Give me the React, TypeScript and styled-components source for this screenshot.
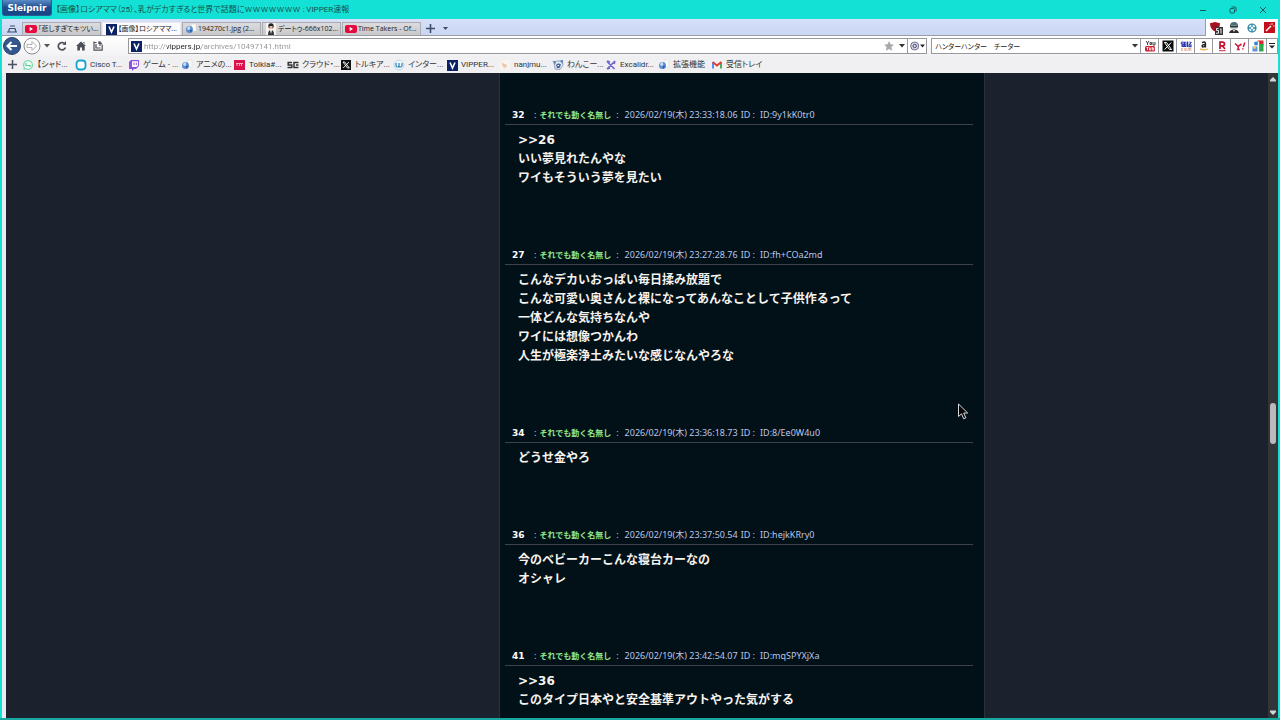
import React from "react";
import styled, { createGlobalStyle } from "styled-components";

const UI_FONT = 'Roboto, "Noto Sans CJK JP", sans-serif';
const TAB_FONT = '"Open Sans", "Noto Sans CJK JP", sans-serif';
const BODY_FONT = '"DejaVu Sans", "Noto Sans CJK JP", sans-serif';
const META_FONT = '"Noto Sans", "Noto Sans CJK JP", sans-serif';

const GlobalStyle = createGlobalStyle`
  *, *::before, *::after { box-sizing: border-box; }
  body { margin: 0; background: #14e1d5; overflow: hidden; }
  button, input { font: inherit; color: inherit; margin: 0; padding: 0; border: 0; background: none; }
  a { color: inherit; text-decoration: none; }
  svg { display: block; flex: none; }
`;

const Window = styled.div`
  display: flex;
  flex-direction: column;
  height: 100vh;
  padding: 0 2px;
  background: #14e1d5;
  border-bottom: 2px solid #17a8a1;
  color: #333;
  font-family: ${UI_FONT};
  font-size: 8px;
  line-height: 12px;
  font-feature-settings: "palt";
`;

const TitleBar = styled.header`
  display: flex;
  align-items: center;
  height: 19px;
  flex: none;
`;

const AppButton = styled.button`
  align-self: flex-start;
  width: 50px;
  height: 16px;
  border: 1px solid #2b5b96;
  border-top: 0;
  border-radius: 0 0 3px 3px;
  background: linear-gradient(#5c8cc6, #1c4c90 50%, #174585);
  color: #fff;
  font-family: "DejaVu Sans", sans-serif;
  font-weight: 700;
  font-size: 9px;
  line-height: 14px;
`;

const PageTitle = styled.h1`
  flex: 1;
  margin: 0;
  padding-left: 4px;
  font-size: 8px;
  font-weight: 400;
  line-height: 18px;
  color: #17514f;
  white-space: nowrap;
`;

const WindowButtons = styled.div`
  display: flex;
`;

const WindowButton = styled.button`
  display: grid;
  place-items: center;
  width: 30px;
  height: 18px;
  color: #155a58;
`;

const TabRow = styled.div`
  display: flex;
  height: 17px;
  flex: none;
  background: #fff;
`;

const TabStrip = styled.div`
  display: flex;
  align-items: flex-end;
  flex: 1;
  gap: 1px;
  background: linear-gradient(#d5e0f8, #cad7f3);
  border-bottom: 1px solid #9a9da6;
  border-right: 1px solid #9a9da6;
`;

const StripButton = styled.button<{ $width: number }>`
  display: grid;
  place-items: center;
  width: ${(p) => p.$width}px;
  height: 13px;
  color: #3f4c68;
`;

const Tab = styled.button<{ $active?: boolean }>`
  display: flex;
  align-items: center;
  gap: 1px;
  width: 79px;
  height: 13px;
  padding-left: 2px;
  border: 1px solid ${(p) => (p.$active ? "#e9e9ee" : "#a9abb2")};
  border-bottom: 0;
  background: ${(p) => (p.$active ? "#fbfbfd" : "linear-gradient(#dcdcde, #c8c8cb)")};
  color: #222;
  font-family: ${TAB_FONT};
  font-size: 7px;
  line-height: 12px;
  white-space: nowrap;
`;

const Extensions = styled.div`
  display: flex;
  width: 72px;
  padding-left: 1px;
`;

const IconButton = styled.button<{ $width: number }>`
  display: grid;
  place-items: center;
  width: ${(p) => p.$width}px;
  height: 100%;
  flex: none;
  color: #4c5058;
`;

const NavRow = styled.div`
  display: flex;
  align-items: center;
  height: 20px;
  flex: none;
  background: linear-gradient(#fff, #f2f2f5);
`;

const NavButtons = styled.div`
  display: flex;
  align-items: center;
  width: 126px;
  height: 20px;
`;

const Field = styled.div<{ $grow: number }>`
  display: flex;
  align-items: center;
  flex: ${(p) => p.$grow} 1 0;
  min-width: 0;
  height: 16px;
  border: 1px solid #98989c;
  background: #fff;
`;

const AddressInput = styled.input`
  flex: 1;
  min-width: 0;
  height: 14px;
  padding-left: 2px;
  outline: 0;
  font-size: 8px;
  color: #999;
  background: linear-gradient(90deg, #949494 25px, #222 25px 59px, #949494 59px);
  background-clip: text;
  -webkit-text-fill-color: transparent;
`;

const SearchInput = styled.input`
  flex: 1;
  min-width: 0;
  height: 14px;
  padding-left: 3px;
  outline: 0;
  font-size: 7px;
  color: #222;
`;

const FieldGap = styled.span`
  width: 4px;
  flex: none;
`;

const EngineButton = styled(IconButton)`
  border-left: 1px solid #98989c;
`;

const Bookmarks = styled.nav`
  display: flex;
  align-items: center;
  height: 17px;
  flex: none;
  padding-left: 1px;
  background: #f0eff2;
`;

const Bookmark = styled.a`
  display: flex;
  align-items: center;
  gap: 3px;
  width: 53px;
  height: 16px;
  flex: none;
  font-size: 8px;
  white-space: nowrap;
`;

const Viewport = styled.div`
  display: flex;
  flex: 1;
  min-height: 0;
  border-left: 4px solid #e6ecf2;
  background: #1b222d;
`;

const Document = styled.div`
  flex: 1;
  min-width: 0;
  overflow: hidden;
`;

const Site = styled.div`
  display: grid;
  grid-template-columns: 210px 1fr;
  max-width: 696px;
  margin: 0 auto;
`;

const Thread = styled.main`
  grid-column: 2;
  min-height: 100vh;
  padding: 35px 11px 0 5px;
  border: 1px solid #2b313c;
  border-width: 0 1px;
  background: #021018;
  font-feature-settings: normal;
`;

const Post = styled.article`
  margin-bottom: 60px;
`;

const PostHeader = styled.header`
  display: flex;
  align-items: center;
  padding: 0 0 2px 7px;
  border-bottom: 1px solid #3c4247;
  font-family: ${META_FONT};
  font-size: 9px;
  line-height: 14px;
  color: #bcc6e8;
  white-space: pre;
`;

const PostNumber = styled.span`
  width: 22px;
  color: #fff;
  font-family: ${BODY_FONT};
  font-weight: 700;
`;

const PostName = styled.b`
  color: #8fe58a;
  font-size: 8px;
  padding: 0 5px 0 3px;
`;

const PostDate = styled.time`
  padding: 0 3px 0 6px;
`;

const PostId = styled.span`
  padding-left: 5px;
`;

const PostBody = styled.p`
  margin: 0;
  padding: 6px 0 0 13px;
  font-family: ${BODY_FONT};
  font-size: 12px;
  font-weight: 700;
  line-height: 19px;
  color: #f6f3ee;
  white-space: pre-line;
`;

const ScrollBar = styled.div`
  display: flex;
  flex-direction: column;
  align-items: center;
  justify-content: space-between;
  width: 10px;
  padding: 4px 0 3px;
  background: #333638;
`;

const ScrollTrack = styled.div`
  display: grid;
  grid-template-rows: 322fr 41px 266fr;
  width: 6px;
  flex: 1;
`;

const ScrollThumb = styled.div`
  grid-row: 2;
  border-radius: 3px;
  background: #bcb9bd;
`;

const Pointer = styled.svg`
  position: absolute;
  left: 957px;
  top: 403px;
`;

const Caret = ({ color = "#333" }: { color?: string }) => (
  <svg width="6" height="4" viewBox="0 0 6 4"><path d="M0 0h6L3 3.5z" fill={color} /></svg>
);

type IconName =
  | "youtube" | "vip" | "globe" | "person" | "whatsapp" | "cisco" | "twitch" | "tolkia"
  | "sc" | "x" | "w" | "cat" | "dog" | "excalidraw" | "gmail";

const glyphs: Record<IconName, React.ReactNode> = {
  youtube: <><rect y="2" width="12" height="8" rx="2" fill="#e5093f" /><path d="M4.7 4v4L8 6z" fill="#fff" /></>,
  vip: <><rect x="1" y="1" width="11" height="11" fill="#0b2265" /><path d="M4 3.5 6.500 9 9 3.5" fill="none" stroke="#fff" strokeWidth="1.6" /></>,
  globe: <><path d="M6 1h5v7H7z" fill="#fafafa" stroke="#d9d4d4" strokeWidth=".5" /><circle cx="4.5" cy="6.5" r="3.5" fill="#5b8ed0" /><path d="M2 5q2-3 3-1t-1 3q-2 0-2-2" fill="#c8e0f7" /><path d="M5 7q2-1 2 1L5 10" fill="#2c5ea6" /></>,
  person: <><rect x="1" width="10" height="12" fill="#f6f3f1" /><circle cx="6" cy="3" r="2.7" fill="#222" /><path d="M4.5 3h3v3h-3z" fill="#e8b9a0" /><path d="M3 12q0-5 3-5t3 5z" fill="#333" /><path d="M5 7h2l-1 4z" fill="#fff" /></>,
  whatsapp: <><circle cx="6" cy="6" r="4.4" fill="#f4fffa" stroke="#7edbb0" strokeWidth="1.4" /><path d="m1.2 11 1-3 2 2z" fill="#7edbb0" /><path d="M4 4v2.5h4V8" fill="none" stroke="#56c994" strokeWidth="1.2" /></>,
  cisco: <rect x="1.5" y="1.5" width="9" height="9" rx="3.2" fill="#fff" stroke="#17a3d2" strokeWidth="1.8" />,
  twitch: <><path d="m1 3 2-2h8v6L8 10H6l-2 2v-2H1z" fill="#8d4fe0" /><path d="M4 2.2h6v4.3L8.5 8H4z" fill="#fff" /><path d="M6 3.5V6M8.3 3.5V6" stroke="#8d4fe0" /></>,
  tolkia: <><rect x="0" y="1" width="11" height="10" fill="#d9124e" /><path d="M2 4.5h7M3 4v3M5.5 5v2M7.5 5v2" stroke="#ffb7c8" strokeWidth=".9" /></>,
  sc: <path d="M5 3.5H1.2V6H4.8V8.5H.5M11.5 3.5H7V8.5h4.5M9 6h2.5" fill="none" stroke="#333" strokeWidth="1.5" />,
  x: <><rect x="1" y="1" width="10" height="10" fill="#111" /><path d="M3 3h1.8l4.5 6H7.5zM9 3 3.2 9" fill="none" stroke="#fff" strokeWidth=".9" /></>,
  w: <><circle cx="6" cy="6" r="4.8" fill="#f6fbff" stroke="#b4d5e7" /><path d="M3 4v2.5Q3 8 4.5 8T6 6.5V4v2.5Q6 8 7.5 8T9 6.5V4" fill="none" stroke="#2a83b7" strokeWidth="1.2" /></>,
  cat: <><rect x="1" y="1" width="10" height="10" fill="#f8f3ee" /><path d="m3 3 2 2h2l1 3-3 1-2-3z" fill="#ecc9ad" /></>,
  dog: <><path d="M2 2.500 10.500 1.500 11 6 8 10.500 3 10z" fill="#dfeaf7" stroke="#8296b8" strokeWidth=".8" /><path d="m.5 2 3.500.5-1 3.500zM8 2l3-1-.5 4z" fill="#5f80b5" /><path d="M4 6q2-2.500 5-.5L7.500 9 5 9.300z" fill="#4a6591" /><path d="M5.500 6.500h1.500" stroke="#fff" strokeWidth="1.1" /></>,
  excalidraw: <path d="M2 2.5 9.5 10M10 2 2 10M2 2l3 1M10 2 9 5M2 10l3-1" fill="none" stroke="#7168c9" strokeWidth="1.7" />,
  gmail: <><path d="M2 9.5V3.5" stroke="#4285f4" strokeWidth="1.8" /><path d="M10 9.5V3.5" stroke="#34a853" strokeWidth="1.8" /><path d="m1.6 3 4.4 3.6L10.4 3" fill="none" stroke="#e43c30" strokeWidth="1.9" /></>,
};

const Icon = ({ name }: { name: IconName }) => (
  <svg width="12" height="12" viewBox="0 0 12 12" aria-hidden="true">{glyphs[name]}</svg>
);

const tabs: { icon: IconName; label: string; active?: boolean }[] = [
  { icon: "youtube", label: "「悲しすぎてキツい..." },
  { icon: "vip", label: "【画像】ロシアママ...", active: true },
  { icon: "globe", label: "194270c1.jpg (2..." },
  { icon: "person", label: "デートゥ-666x102..." },
  { icon: "youtube", label: "Time Takers - Of..." },
];

const bookmarks: { icon: IconName; label: string }[] = [
  { icon: "whatsapp", label: "【シャド..." },
  { icon: "cisco", label: "Cisco T..." },
  { icon: "twitch", label: "ゲーム - ..." },
  { icon: "globe", label: "アニメの..." },
  { icon: "tolkia", label: "Tolkia#..." },
  { icon: "sc", label: "クラウド・..." },
  { icon: "x", label: "トルキア..." },
  { icon: "w", label: "インター..." },
  { icon: "vip", label: "VIPPER..." },
  { icon: "cat", label: "nanjmu..." },
  { icon: "dog", label: "わんこー..." },
  { icon: "excalidraw", label: "Excalidr..." },
  { icon: "globe", label: "拡張機能" },
  { icon: "gmail", label: "受信トレイ" },
];

const engines: { label: string; art: React.ReactNode }[] = [
  { label: "YouTube", art: <><path d="M2 1l1.5 2L5 1M3.5 3v2M6 2.5h1.5v2H6zM9 2v3h2V2" fill="none" stroke="#444" /><rect x="1" y="6" width="10" height="5.5" rx="1.5" fill="#cf2036" /><path d="M2.5 7.5h2M3.5 7.5V10M5.5 7.5V10h1.3V7.5M8.3 7v3h1.4V8H8.3" fill="none" stroke="#fff" strokeWidth=".8" /></> },
  { label: "X", art: <><rect x=".5" y=".5" width="11" height="11" fill="#0c0c0c" /><path d="M2.5 2.5h2l5 7h-2zM9.2 2.5 2.7 9.5" fill="none" stroke="#fff" /></> },
  { label: "価格.com", art: <><path d="M2 2v5M.8 3.5 2.5 1.5M3 2.2h3.2M3.2 4h2.7v2.5H3.2zM4.5 2v4M7.5 1.5V7M6.6 3h2M9.5 2 11 2.5 9 5M9 5h2v1.7H9z" fill="none" stroke="#2a37ad" strokeWidth="1.1" /><path d="M3 8.5H1.5v2H3M4.7 8.5h1.5v2H4.7zM8 11V8.5h3V11M9.5 8.5V11" fill="none" stroke="#e3a083" strokeWidth=".8" /></> },
  { label: "Amazon", art: <><path d="M4 2.7Q7.4.9 7.4 3.5v4M7.3 4.5Q4 4.4 4.2 6.2T7.3 6" fill="none" stroke="#222" strokeWidth="1.5" /><path d="M2 8.8q4 2.4 8-.1" fill="none" stroke="#f2a73b" strokeWidth="1.2" /></> },
  { label: "楽天", art: <><path d="M4 9V2.2h2.5q2 0 2 1.8T6.5 5.8H4M6.3 5.8 9 9" fill="none" stroke="#c4102e" strokeWidth="1.7" /><path d="M3 10.7h6.5" stroke="#c4102e" strokeWidth=".9" /></> },
  { label: "Yahoo!", art: <><path d="m1 3.5 3.2 3L7.5 4M4.2 6.2v3.2M2.8 9.5h3" fill="none" stroke="#d11b45" strokeWidth="1.6" /><path d="M10.8 2.5 9.3 7M8.8 8.2v1.2" stroke="#d11b45" strokeWidth="1.5" /></> },
  { label: "Google", art: <><rect x="5.500" y=".5" width="6" height="5" fill="#d62b2b" /><rect x="7" y="4" width="4.500" height="7.500" fill="#2ba84a" /><rect x=".5" y="6.500" width="5" height="5" fill="#5d93dd" /><circle cx="4" cy="3.500" r="2" fill="#3d83d8" /><path d="M6.500 1.500v8" stroke="#fff" strokeWidth="1.300" /><circle cx="2.500" cy="7.500" r="1.400" fill="#f1d35a" /></> },
];

const posts = [
  { no: 32, time: "2026/02/19(木) 23:33:18.06", id: "9y1kK0tr0", body: ">>26\nいい夢見れたんやな\nワイもそういう夢を見たい" },
  { no: 27, time: "2026/02/19(木) 23:27:28.76", id: "fh+COa2md", body: "こんなデカいおっぱい毎日揉み放題で\nこんな可愛い奥さんと裸になってあんなことして子供作るって\n一体どんな気持ちなんや\nワイには想像つかんわ\n人生が極楽浄土みたいな感じなんやろな" },
  { no: 34, time: "2026/02/19(木) 23:36:18.73", id: "8/Ee0W4u0", body: "どうせ金やろ" },
  { no: 36, time: "2026/02/19(木) 23:37:50.54", id: "hejkKRry0", body: "今のベビーカーこんな寝台カーなの\nオシャレ" },
  { no: 41, time: "2026/02/19(木) 23:42:54.07", id: "mqSPYXjXa", body: ">>36\nこのタイプ日本やと安全基準アウトやった気がする" },
];

export default function App() {
  return (
    <>
      <GlobalStyle />
      <Window>
        <TitleBar>
          <AppButton>Sleipnir</AppButton>
          <PageTitle>【画像】ロシアママ（25）、乳がデカすぎると世界で話題にｗｗｗｗｗｗｗ : VIPPER速報</PageTitle>
          <WindowButtons>
            <WindowButton aria-label="Minimize"><svg width="8" height="8" viewBox="0 0 8 8"><path d="M1 4.5h6" stroke="currentColor" /></svg></WindowButton>
            <WindowButton aria-label="Restore"><svg width="8" height="8" viewBox="0 0 8 8" fill="none" stroke="currentColor"><rect x="1" y="2.5" width="4.5" height="4.5" rx="1" /><path d="M2.5 1H6q1 0 1 1v3.5" /></svg></WindowButton>
            <WindowButton aria-label="Close"><svg width="8" height="8" viewBox="0 0 8 8"><path d="m1 1 6 6M7 1 1 7" stroke="currentColor" /></svg></WindowButton>
          </WindowButtons>
        </TitleBar>

        <TabRow>
          <TabStrip>
            <StripButton $width={19} aria-label="Tab groups"><svg width="10" height="8" viewBox="0 0 10 8"><path d="M3 1h5M2 3.5h6L9 7M0 7h10M2 4v3" stroke="currentColor" strokeWidth="1.2" fill="none" /></svg></StripButton>
            {tabs.map((t) => (
              <Tab key={t.label} $active={t.active}><Icon name={t.icon} />{t.label}</Tab>
            ))}
            <StripButton $width={16} aria-label="New tab"><svg width="9" height="9" viewBox="0 0 9 9"><path d="M4.5 0v9M0 4.5h9" stroke="currentColor" strokeWidth="1.6" /></svg></StripButton>
            <StripButton $width={12} aria-label="Tab list"><svg width="5" height="3" viewBox="0 0 5 3"><path d="M0 0h5L2.5 3z" fill="currentColor" /></svg></StripButton>
          </TabStrip>
          <Extensions>
            <IconButton $width={18} aria-label="Blocker"><svg width="14" height="14" viewBox="0 0 14 14"><path d="M1 2.2 6 1l5 1.2q0 6-5 8.3-5-2.300-5-8.300z" fill="#a3131f" /><rect x="6" y="6" width="8" height="8" fill="#333" /><path d="M9.500 7.500H7.500v2H9.500v2.700H7M11 8.500l1-.8v5" fill="none" stroke="#fff" strokeWidth=".9" /></svg></IconButton>
            <IconButton $width={18} aria-label="User agent"><svg width="10" height="11" viewBox="0 0 10 11"><path d="M1 4q0-4 4-4t4 4z" fill="#4c6f78" /><path d="M2 3h6v4H2z" fill="#c9d3d3" /><path d="M1 3.500h8v2H1z" fill="#2d3a40" /><path d="M0 11q1-3.500 5-3.500t5 3.500z" fill="#2b2b2f" /><path d="M4 8h2l-1 2z" fill="#fff" /></svg></IconButton>
            <IconButton $width={18} aria-label="Target"><svg width="10" height="10" viewBox="0 0 10 10"><circle cx="5" cy="5" r="4" fill="#e9f6fb" stroke="#2a80a5" strokeWidth="1.200" /><path d="M5 1v3M5 6v3M1 5h3M6 5h3" stroke="#2a80a5" strokeWidth="1.300" /></svg></IconButton>
            <IconButton $width={17} aria-label="Magic wand"><svg width="11" height="11" viewBox="0 0 11 11"><rect width="11" height="11" fill="#c3101c" /><path d="m2 9 5-5" stroke="#fff" strokeWidth="1.500" /><path d="M8 1v2M9 4h1.500M5.500 2l.7.700" stroke="#fff" strokeWidth=".8" /></svg></IconButton>
          </Extensions>
        </TabRow>

        <NavRow>
          <NavButtons>
            <IconButton $width={20} aria-label="Back"><svg width="18" height="18" viewBox="0 0 18 18"><circle cx="9" cy="9" r="8.500" fill="#33588f" stroke="#27426c" /><path d="M14 9H5M8.500 5 4.500 9l4 4" fill="none" stroke="#fff" strokeWidth="2" /></svg></IconButton>
            <IconButton $width={20} aria-label="Forward"><svg width="18" height="18" viewBox="0 0 18 18"><circle cx="9" cy="9" r="8" fill="#fafafa" stroke="#8c8c92" /><path d="M4 7.500h5V4.500L13.500 9 9 13.500v-3H4z" fill="#fff" stroke="#b4b4b8" /></svg></IconButton>
            <IconButton $width={10} aria-label="History"><Caret color="#555" /></IconButton>
            <IconButton $width={20} aria-label="Reload"><svg width="10" height="10" viewBox="0 0 10 10"><path d="M8.500 6.500A3.700 3.700 0 1 1 7.300 2.300" fill="none" stroke="currentColor" strokeWidth="1.700" /><path d="M5.500 3.700 9 0v4z" fill="currentColor" /></svg></IconButton>
            <IconButton $width={17} aria-label="Home"><svg width="10" height="10" viewBox="0 0 10 10"><path d="M0 5 5 .500 10 5H8.700v4.500H6V6.500H4v3H1.300V5zM7 1h1.500v2z" fill="currentColor" /></svg></IconButton>
            <IconButton $width={17} aria-label="Save page"><svg width="10" height="10" viewBox="0 0 10 10"><path d="M1 .500v8.700h8.200V3.500M1 1.500h2.500M3 3v4h4.500M5 1l2 .2V5M5.500 3 7 1l1.700 2" fill="none" stroke="currentColor" strokeWidth="1.200" /></svg></IconButton>
          </NavButtons>
          <Field $grow={800}>
            <IconButton $width={13} aria-label="Site information"><Icon name="vip" /></IconButton>
            <AddressInput aria-label="Address" defaultValue="http://vippers.jp/archives/10497141.html" />
            <IconButton $width={16} aria-label="Add bookmark"><svg width="10" height="10" viewBox="0 0 10 10"><path d="m5 0 1.500 3.300L10 3.700 7.400 6.100 8.100 9.800 5 8 1.900 9.800 2.600 6.100 0 3.700l3.500-.4z" fill="#a9a9ad" /></svg></IconButton>
            <IconButton $width={10} aria-label="Address history"><Caret /></IconButton>
            <EngineButton $width={19} aria-label="Engine"><svg width="15" height="10" viewBox="0 0 15 10"><circle cx="4.700" cy="5" r="4" fill="#d8d9e5" stroke="#70728a" /><circle cx="4.700" cy="5" r="1.700" fill="none" stroke="#4b4d70" /><path d="M10 3.500h5l-2.500 3z" fill="#222" /></svg></EngineButton>
          </Field>
          <FieldGap />
          <Field $grow={346}>
            <SearchInput aria-label="Search" defaultValue="ハンターハンター　チーター" />
            <IconButton $width={11} aria-label="Search history"><Caret /></IconButton>
            {engines.map((e) => (
              <EngineButton key={e.label} $width={18} aria-label={e.label}><svg width="12" height="12" viewBox="0 0 12 12">{e.art}</svg></EngineButton>
            ))}
            <EngineButton $width={11} aria-label="More engines"><svg width="6" height="6" viewBox="0 0 6 6"><path d="M0 .500h6" stroke="#222" /><path d="M0 2.500h6L3 5.500z" fill="#222" /></svg></EngineButton>
          </Field>
        </NavRow>

        <Bookmarks>
          <IconButton $width={19} aria-label="Add to bookmarks"><svg width="9" height="9" viewBox="0 0 9 9"><path d="M4.500 0v9M0 4.500h9" stroke="#4c5464" strokeWidth="1.600" /></svg></IconButton>
          {bookmarks.map((b) => (
            <Bookmark key={b.label} href="#"><Icon name={b.icon} />{b.label}</Bookmark>
          ))}
        </Bookmarks>

        <Viewport>
          <Document>
            <Site>
              <Thread>
                {posts.map((p) => (
                  <Post key={p.no}>
                    <PostHeader>
                      <PostNumber>{p.no}</PostNumber>
                      <span>:</span>
                      <PostName>それでも動く名無し</PostName>
                      <span>:</span>
                      <PostDate>{p.time}</PostDate>
                      <span>ID :</span>
                      <PostId>ID:{p.id}</PostId>
                    </PostHeader>
                    <PostBody>{p.body}</PostBody>
                  </Post>
                ))}
              </Thread>
            </Site>
          </Document>
          <ScrollBar>
            <svg width="6" height="5" viewBox="0 0 6 5"><path d="M3 0 6 3v1.500H0V3z" fill="#d3d3d5" /></svg>
            <ScrollTrack><ScrollThumb /></ScrollTrack>
            <svg width="6" height="5" viewBox="0 0 6 5"><path d="M0 .500h6V2L3 5 0 2z" fill="#d3d3d5" /></svg>
          </ScrollBar>
        </Viewport>
      </Window>
      <Pointer width="12" height="18" viewBox="0 0 12 18" aria-hidden="true">
        <path d="M1.500 1v12.500l3-2.700 2.200 5 2.200-1-2.200-4.800h4z" fill="#050505" stroke="#d9d9d9" strokeWidth="1" />
      </Pointer>
    </>
  );
}
